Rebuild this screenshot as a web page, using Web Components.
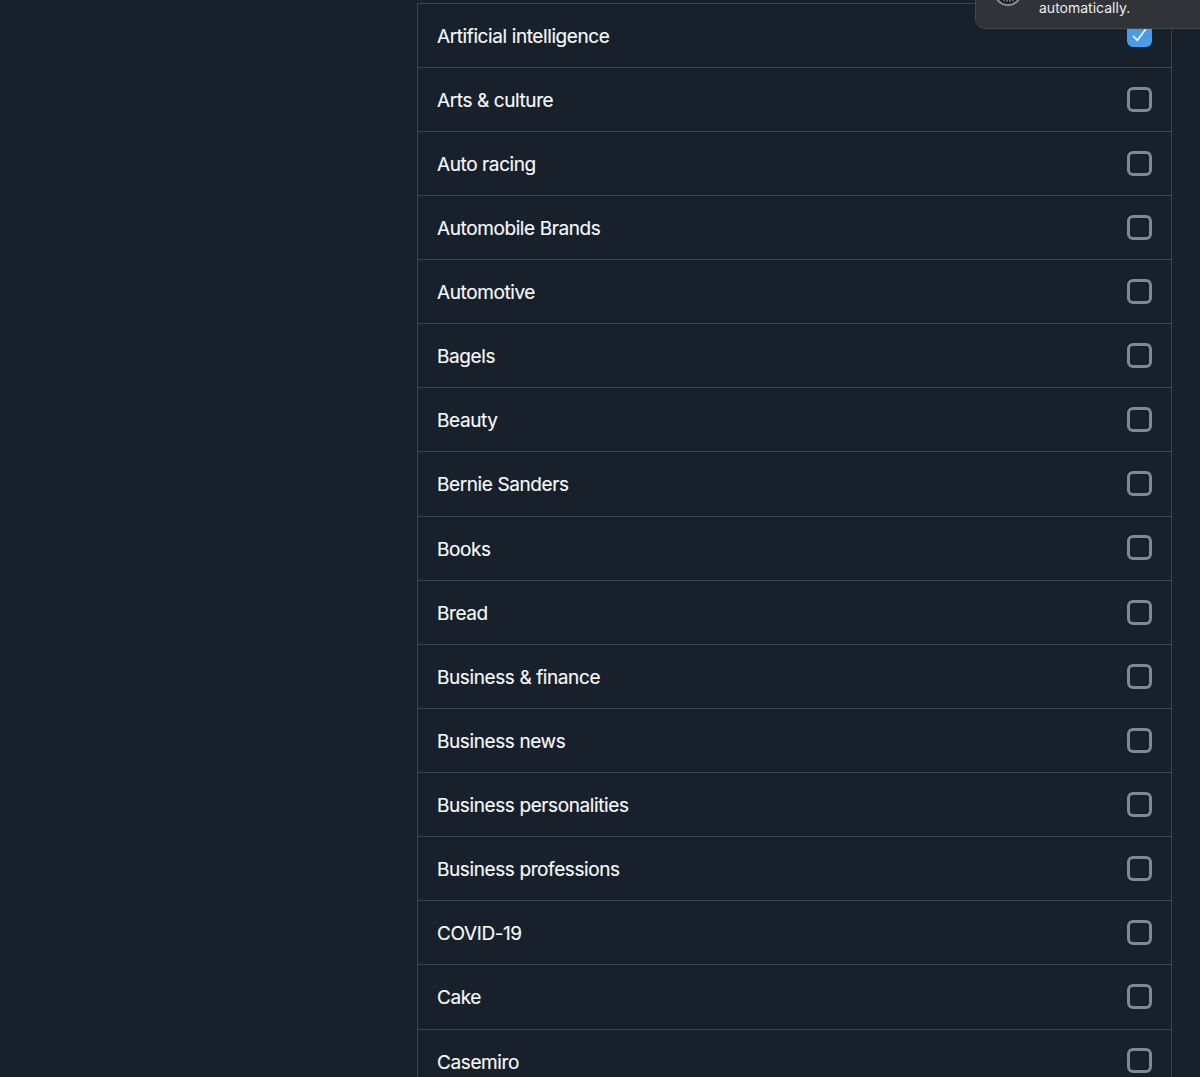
<!DOCTYPE html>
<html>
<head>
<meta charset="utf-8">
<style>
  html, body { margin: 0; height: 100%; overflow: hidden; background: #17202b; }
  body { font-family: Inter, "Liberation Sans", sans-serif; }
</style>
</head>
<body>
<topic-list>
  <topic-row checked>Artificial intelligence</topic-row>
  <topic-row>Arts &amp; culture</topic-row>
  <topic-row>Auto racing</topic-row>
  <topic-row>Automobile Brands</topic-row>
  <topic-row>Automotive</topic-row>
  <topic-row>Bagels</topic-row>
  <topic-row>Beauty</topic-row>
  <topic-row>Bernie Sanders</topic-row>
  <topic-row>Books</topic-row>
  <topic-row>Bread</topic-row>
  <topic-row>Business &amp; finance</topic-row>
  <topic-row>Business news</topic-row>
  <topic-row>Business personalities</topic-row>
  <topic-row>Business professions</topic-row>
  <topic-row>COVID-19</topic-row>
  <topic-row>Cake</topic-row>
  <topic-row>Casemiro</topic-row>
</topic-list>
<toast-note>automatically.</toast-note>

<script>
class TopicList extends HTMLElement {
  constructor() {
    super();
    this.attachShadow({ mode: 'open' });
    this.shadowRoot.innerHTML = `
      <style>
        :host {
          display: block;
          box-sizing: border-box;
          width: 755px;
          margin: 2.6px 0 0 417px;
          border-left: 1px solid #3a444f;
          border-right: 1px solid #3a444f;
          border-top: 1px solid #3a444f;
        }
      </style>
      <slot></slot>
    `;
  }
}

class TopicRow extends HTMLElement {
  constructor() {
    super();
    this.attachShadow({ mode: 'open' });
    this.shadowRoot.innerHTML = `
      <style>
        :host {
          display: flex;
          align-items: center;
          justify-content: space-between;
          box-sizing: border-box;
          height: 64.125px;
          padding: 0 19px;
          border-bottom: 1px solid #3a444f;
          color: #f7f9f9;
          font-size: 19px;
          letter-spacing: -0.4px;
          line-height: 24px;
          -webkit-text-stroke: 0.15px #f7f9f9;
        }
        span { margin-top: 2.8px; }
        .box {
          box-sizing: border-box;
          width: 25px;
          height: 25px;
          margin-bottom: 0.5px;
          border: 3px solid #7e8994;
          border-radius: 6px;
        }
        :host([checked]) .box {
          background: #4a9be8;
          border-color: #4a9be8;
        }
        svg { display: none; width: 25px; height: 25px; margin: -3px; }
        :host([checked]) svg { display: block; }
      </style>
      <span><slot></slot></span>
      <div class="box">
        <svg viewBox="0 0 25 25" fill="none" stroke="#fff" stroke-width="1.7">
          <path d="M6 14 L10.4 18.3 L18.7 7.3"/>
        </svg>
      </div>
    `;
  }
}

class ToastNote extends HTMLElement {
  constructor() {
    super();
    this.attachShadow({ mode: 'open' });
    this.shadowRoot.innerHTML = `
      <style>
        :host {
          position: absolute;
          top: -40px;
          left: 975px;
          width: 240px;
          height: 69px;
          box-sizing: border-box;
          padding-left: 63px;
          padding-top: 38px;
          background: #303338;
          border: 1px solid #45484d;
          border-radius: 10px;
          color: #eceded;
          font-size: 14px;
          line-height: 18px;
        }
        .avatar {
          position: absolute;
          left: 18px;
          top: 17px;
          width: 28px;
          height: 28px;
          box-sizing: border-box;
          border: 2px solid #8b8d8f;
          border-radius: 50%;
          background: #141517;
        }
        .avatar svg { display: block; width: 24px; height: 24px; }
      </style>
      <div class="avatar">
        <svg viewBox="0 0 24 24" fill="none" stroke="#9a9c9e" stroke-width="1.2">
          <path d="M8 18.5v3M11 18.5v3.5M14 18.5v3.5M17 18.5v3"/>
        </svg>
      </div>
      <slot></slot>
    `;
  }
}

customElements.define('topic-list', TopicList);
customElements.define('topic-row', TopicRow);
customElements.define('toast-note', ToastNote);
</script>
</body>
</html>
